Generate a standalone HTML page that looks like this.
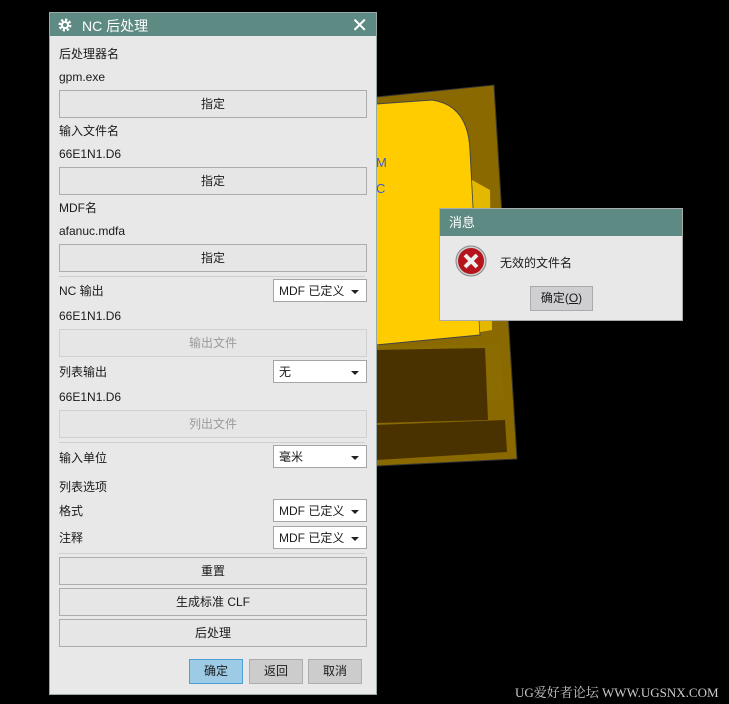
<!DOCTYPE html>
<html><head><meta charset="utf-8"><style>
body{margin:0;width:729px;height:704px;background:#000;position:relative;overflow:hidden;font-family:"Liberation Sans","Noto Sans CJK SC",sans-serif;font-size:12px;color:#1a1a1a}
.a{position:absolute}
.dlg{left:49px;top:12px;width:328px;height:683px;background:#e8e8e8;border:1px solid #9aa;box-sizing:border-box}
.t{position:absolute;left:0;top:0;right:0;height:23px;background:#5d8a82;color:#fff;font-size:14px}
.l{position:absolute;left:9px;line-height:16px;font-size:12px}
.b{position:absolute;left:9px;width:306px;height:26px;border:1px solid #adadad;background:#e6e6e6;text-align:center;line-height:26px}
.dis{color:#9a9a9a;border-color:#d0d0d0}
.dd{position:absolute;left:223px;height:23px;border:1px solid #a5a5a5;background:#fff;line-height:23px;padding-left:5px;box-sizing:border-box;width:94px}
.dd:after{content:"";position:absolute;right:7px;top:10px;border-left:4px solid transparent;border-right:4px solid transparent;border-top:4px solid #222}
.sep{position:absolute;left:9px;width:306px;height:1px;background:#cfcfcf}
.sb{position:absolute;top:646px;width:52px;height:23px;border:1px solid #adadad;background:#ccc;text-align:center;line-height:23px}
</style></head><body>
<svg class="a" style="left:0;top:0" width="729" height="704">
<polygon points="376,97 494,85 517,459 376,466" fill="#8a6a00" stroke="#333"/>
<path d="M376,104 L432,100 Q468,105 470,150 L480,335 L376,345Z" fill="#ffcc00" stroke="#444"/>
<polygon points="472,180 490,190 492,330 480,332" fill="#e5b800"/>
<polygon points="376,345 500,345 504,400 376,405" fill="#8a6c00"/>
<polygon points="376,350 485,348 488,420 376,423" fill="#4a3200"/>
<polygon points="376,425 505,420 507,452 376,460" fill="#4a3200"/>
<text x="376" y="167" fill="#3b5bdb" font-size="13" font-family="Liberation Sans">M</text>
<text x="376" y="193" fill="#3b5bdb" font-size="13" font-family="Liberation Sans">C</text>
</svg>
<div class="a dlg">
<div class="t"><svg class="a" style="left:7px;top:4px" width="16" height="16" viewBox="0 0 16 16"><circle cx="8" cy="8" r="5" fill="none" stroke="#fff" stroke-width="3" stroke-dasharray="2.2 1.7"/><circle cx="8" cy="8" r="4" fill="#fff"/><circle cx="8" cy="8" r="2" fill="#5d8a82"/></svg><span class="a" style="left:32px;top:3px">NC 后处理</span><span class="a" style="right:8px;top:0px;font-size:20px">✕</span></div>
<div class="l" style="top:33px">后处理器名</div>
<div class="l" style="top:56px">gpm.exe</div>
<div class="b" style="top:77px">指定</div>
<div class="l" style="top:110px">输入文件名</div>
<div class="l" style="top:133px">66E1N1.D6</div>
<div class="b" style="top:154px">指定</div>
<div class="l" style="top:187px">MDF名</div>
<div class="l" style="top:210px">afanuc.mdfa</div>
<div class="b" style="top:231px">指定</div>
<div class="sep" style="top:263px"></div>
<div class="l" style="top:270px">NC 输出</div><div class="dd" style="top:266px">MDF 已定义</div>
<div class="l" style="top:295px">66E1N1.D6</div>
<div class="b dis" style="top:316px">输出文件</div>
<div class="l" style="top:351px">列表输出</div><div class="dd" style="top:347px">无</div>
<div class="l" style="top:376px">66E1N1.D6</div>
<div class="b dis" style="top:397px">列出文件</div>
<div class="sep" style="top:429px"></div>
<div class="l" style="top:437px">输入单位</div><div class="dd" style="top:432px">毫米</div>
<div class="l" style="top:466px">列表选项</div>
<div class="l" style="top:490px">格式</div><div class="dd" style="top:486px">MDF 已定义</div>
<div class="l" style="top:517px">注释</div><div class="dd" style="top:513px">MDF 已定义</div>
<div class="sep" style="top:540px"></div>
<div class="b" style="top:544px">重置</div>
<div class="b" style="top:575px">生成标准 CLF</div>
<div class="b" style="top:606px">后处理</div>
<div class="sb" style="left:139px;background:#9dcbe6;border-color:#4a9fd5">确定</div>
<div class="sb" style="left:199px">返回</div>
<div class="sb" style="left:258px">取消</div>
</div>
<div class="a" style="left:439px;top:208px;width:244px;height:113px;background:#e8e8e8;border:1px solid #aaa;box-sizing:border-box">
<div class="a" style="left:0;top:0;right:0;height:27px;background:#5d8a82;color:#fff;font-size:13px;line-height:27px;padding-left:9px">消息</div>
<svg class="a" style="left:15px;top:36px" width="32" height="32" viewBox="0 0 32 32"><circle cx="16" cy="16" r="15" fill="#ccc" stroke="#888"/><circle cx="16" cy="16" r="13" fill="#b5141c"/><path d="M10 10L22 22M22 10L10 22" stroke="#eee" stroke-width="4"/></svg>
<div class="a" style="left:60px;top:45px">无效的文件名</div>
<div class="a" style="left:90px;top:77px;width:61px;height:23px;border:1px solid #aaa;background:#cfcfd2;text-align:center;line-height:23px">确定(<u>O</u>)</div>
</div>
<div class="a" style="left:515px;top:682px;color:#ccc;font-family:'Liberation Serif','Noto Serif CJK SC',serif;font-size:13px">UG爱好者论坛 WWW.UGSNX.COM</div>
</body></html>
